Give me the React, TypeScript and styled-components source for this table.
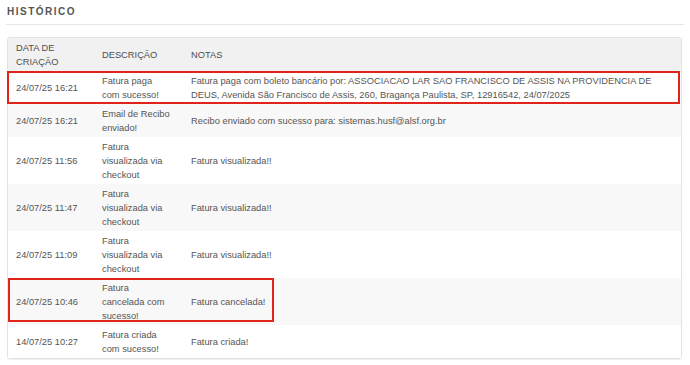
import React from 'react'
import styled, { createGlobalStyle } from 'styled-components'

const GlobalStyle = createGlobalStyle`
  html, body {
    margin: 0;
    padding: 0;
    background: #ffffff;
  }
  body {
    font-family: 'Liberation Sans', Arial, Helvetica, sans-serif;
    color: #555555;
  }
`

interface HistoryEntry {
  date: string
  description: string
  notes: string
  highlight?: number | 'full'
}

const entries: HistoryEntry[] = [
  {
    date: '24/07/25 16:21',
    description: 'Fatura paga com sucesso!',
    notes:
      'Fatura paga com boleto bancário por: ASSOCIACAO LAR SAO FRANCISCO DE ASSIS NA PROVIDENCIA DE DEUS, Avenida São Francisco de Assis, 260, Bragança Paulista, SP, 12916542, 24/07/2025',
    highlight: 'full',
  },
  {
    date: '24/07/25 16:21',
    description: 'Email de Recibo enviado!',
    notes: 'Recibo enviado com sucesso para: sistemas.husf@alsf.org.br',
  },
  {
    date: '24/07/25 11:56',
    description: 'Fatura visualizada via checkout',
    notes: 'Fatura visualizada!!',
  },
  {
    date: '24/07/25 11:47',
    description: 'Fatura visualizada via checkout',
    notes: 'Fatura visualizada!!',
  },
  {
    date: '24/07/25 11:09',
    description: 'Fatura visualizada via checkout',
    notes: 'Fatura visualizada!!',
  },
  {
    date: '24/07/25 10:46',
    description: 'Fatura cancelada com sucesso!',
    notes: 'Fatura cancelada!',
    highlight: 266,
  },
  {
    date: '14/07/25 10:27',
    description: 'Fatura criada com sucesso!',
    notes: 'Fatura criada!',
  },
]

const Page = styled.div`
  padding: 5px 8px 8px 7px;
`

const Title = styled.h2`
  margin: 0;
  font-size: 10px;
  line-height: 14px;
  font-weight: 700;
  letter-spacing: 1.5px;
  color: #555555;
`

const Divider = styled.div`
  margin: 5px -2px 0 -1px;
  border-top: 1px solid #e6e6e6;
`

const Card = styled.div`
  margin-top: 12px;
  border: 1px solid #e3e3e3;
  border-radius: 3px;
  box-shadow: 0 1px 1px rgba(0, 0, 0, 0.07);
  overflow: visible;
`

const Row = styled.div<{ $head?: boolean; $striped?: boolean }>`
  position: relative;
  display: grid;
  grid-template-columns: 86px 89px 1fr;
  align-items: center;
  background: ${(p) => (p.$head ? '#f1f1f1' : p.$striped ? '#f8f8f8' : '#ffffff')};
  border-radius: ${(p) => (p.$head ? '3px 3px 0 0' : '0')};
`

const Cell = styled.div`
  padding: 2.5px 12px 2.5px 8px;
  font-size: 9.3px;
  line-height: 14px;
  color: #555555;
`

const HeadCell = styled(Cell)`
  padding-top: 2.5px;
  padding-bottom: 2.5px;
  color: #4e4e4e;
`

const Highlight = styled.div<{ $width?: number }>`
  position: absolute;
  top: 0;
  bottom: ${(p) => (p.$width ? '3px' : '0')};
  left: ${(p) => (p.$width ? '0' : '-1px')};
  width: ${(p) => (p.$width ? `${p.$width}px` : 'calc(100% + 0px)')};
  border: 2px solid #e0241c;
  box-sizing: border-box;
  pointer-events: none;
`

const App: React.FC = () => {
  return (
    <>
      <GlobalStyle />
      <Page>
        <Title>HISTÓRICO</Title>
        <Divider />
        <Card>
          <Row $head>
            <HeadCell>DATA DE CRIAÇÃO</HeadCell>
            <HeadCell>DESCRIÇÃO</HeadCell>
            <HeadCell>NOTAS</HeadCell>
          </Row>
          {entries.map((entry, i) => (
            <Row key={i} $striped={i % 2 === 1}>
              <Cell>{entry.date}</Cell>
              <Cell>{entry.description}</Cell>
              <Cell>{entry.notes}</Cell>
              {entry.highlight ? (
                <Highlight
                  $width={entry.highlight === 'full' ? undefined : entry.highlight}
                />
              ) : null}
            </Row>
          ))}
        </Card>
      </Page>
    </>
  )
}

export default App
